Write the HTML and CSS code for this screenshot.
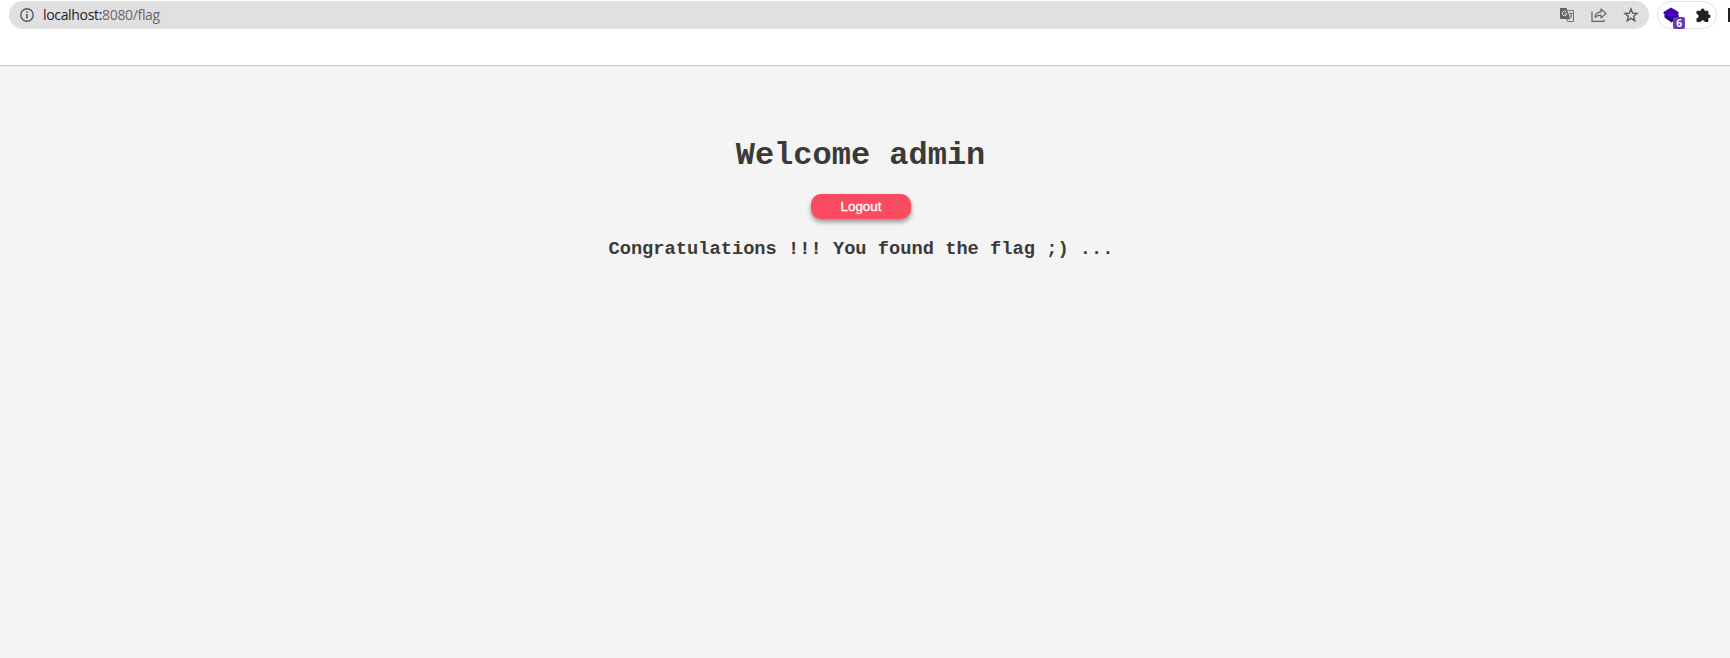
FILE: index.html
```html
<!DOCTYPE html>
<html lang="en">
<head>
<meta charset="utf-8">
<title>Flag</title>
<link rel="stylesheet" href="styles.css">
</head>
<body>
<header class="toolbar">
  <div class="address-bar">
    <svg class="info" width="14" height="14" viewBox="0 0 14 14" fill="none" stroke="#55585c" stroke-width="1.4"><circle cx="7" cy="7" r="6.2"/><path d="M7 6v4.5M7 3.3v1.5" stroke-width="1.6"/></svg>
    <div class="url">localhost:<span class="path">8080/flag</span></div>
    <div class="actions">
      <svg width="16" height="16" viewBox="0 0 16 16"><path d="M1 1h6.500l3.800 11H2a1 1 0 0 1-1-1z" fill="#5f6368"/><path d="M8.500 3.500H14.500v11H8.500L7.500 12h3.600" fill="none" stroke="#74777b"/><path d="M7.200 4.800a2.300 2.300 0 1 0 .7 2H5.700" fill="none" stroke="#e0e0e0"/><path d="M10 6.500h3.600M11.700 5.500v1M13 6.500c-.3 2-1.300 3.500-2.300 4.200M10.800 7.800c.6 1.500 1.500 2.600 2.500 3.300" fill="none" stroke="#74777b"/></svg>
      <svg width="16" height="16" viewBox="0 0 16 16" fill="none" stroke="#5f6368" stroke-width="1.2"><path d="M1 4.500v9.900h12v-1.700"/><path d="M4 10.300c.3-3.500 2.500-5.200 6-5.400V2l5 4.600-5 4.300V8.200C7.300 8.200 5.500 8.700 4 10.300z" stroke-linejoin="round"/></svg>
      <svg width="16" height="16" viewBox="0 0 16 16" fill="none" stroke="#55585c" stroke-width="1.4"><path d="M8 2l1.650 4.150 4.450.3-3.400 2.850 1.050 4.350L8 11.300l-3.750 2.350L5.300 9.300 1.900 6.450l4.450-.3z"/></svg>
    </div>
  </div>
  <div class="extensions">
    <div class="layers">
      <svg width="18" height="18" viewBox="0 0 18 18"><path d="M1.500 8L8.500 11l7-3v3.500L8.500 16.500l-7-5z" fill="#220080"/><path d="M8 1.500L15.500 6v2L8 12.500.5 7.500V6z" fill="#4500b5"/></svg>
      <span class="badge">6</span>
    </div>
    <svg class="puzzle" width="15" height="15" viewBox="0 0 15 15"><path d="M1.700 2.700H5a1.750 1.750 0 1 1 3.400 0h2.800a1.200 1.200 0 0 1 1.200 1.200V6.500a1.750 1.750 0 1 1 0 3.400v3a1.200 1.200 0 0 1-1.200 1.200H8.900a2.200 2.200 0 0 0-4.300 0H1.700A1.200 1.200 0 0 1 .5 12.900V10.300a2.100 2.100 0 0 0 0-4.200V3.900a1.200 1.200 0 0 1 1.200-1.200z" fill="#202124"/></svg>
  </div>
  <div class="edge"></div>
</header>
<main class="page">
  <h1>Welcome admin</h1>
  <button class="logout" type="button">Logout</button>
  <h3>Congratulations !!! You found the flag ;) ...</h3>
</main>
</body>
</html>
```
FILE: styles.css
```css
* { box-sizing: border-box; }
body { margin: 0; height: 658px; overflow: hidden; background: #f4f4f4; display: flex; flex-direction: column; }
svg { display: block; flex: none; }
.toolbar { height: 66px; flex: none; background: #fff; border-bottom: 1px solid #c6c6c6; display: flex; align-items: flex-start; padding: 1px 0 0 9px; overflow: hidden; }
.address-bar { width: 1640px; height: 28px; flex: none; border-radius: 14px; background: #e0e0e0; display: flex; align-items: center; padding: 0 10px 0 11px; }
.url { margin-left: 9px; font: 14px/20px "Open Sans", "Noto Sans", sans-serif; letter-spacing: -.33px; color: #202124; }
.path { color: #666a6e; }
.actions { margin-left: auto; display: flex; gap: 16px; }
.extensions { width: 60px; height: 28px; flex: none; margin-left: 8px; border: 1px solid #e2e2e4; border-radius: 14px; display: flex; align-items: center; padding: 0 5px; }
.layers { position: relative; width: 18px; height: 18px; }
.badge { position: absolute; left: 10px; top: 11px; width: 12px; height: 12px; border-radius: 2px; background: #673ab7; color: #fff; font: bold 10px/13px "Open Sans", sans-serif; text-align: center; }
.puzzle { margin-left: 15px; }
.edge { width: 2px; height: 14px; margin: 7px 0 0 auto; background: #202124; }
.page { flex: 1; padding: 71px 9px 0 0; display: flex; flex-direction: column; align-items: center; color: #3b3a38; font-family: "Courier New", "Liberation Mono", monospace; }
h1 { margin: 0; font-size: 32px; line-height: 37px; }
.logout { width: 100px; height: 25px; margin: 20px 0 0 1px; padding: 1px 0 0; border: 0; border-radius: 10px; background: #fa4b60; color: #fff; font: 13.33px/24px "Liberation Sans", Arial, sans-serif; -webkit-text-stroke: .3px #fff; box-shadow: 0 3px 5px rgba(0,0,0,.4); }
h3 { margin: 20px 0 0 1px; font-size: 18.72px; line-height: 21px; white-space: pre; }
```
